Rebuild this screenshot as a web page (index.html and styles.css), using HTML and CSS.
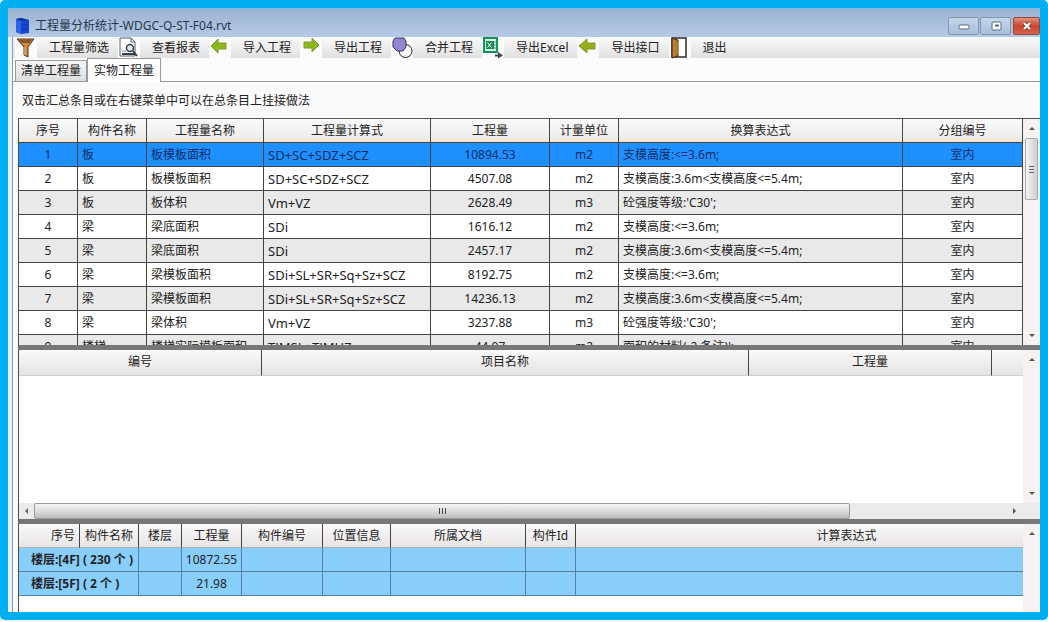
FILE: index.html
```html
<!DOCTYPE html>
<html lang="zh-CN">
<head>
<meta charset="utf-8">
<title>工程量分析统计</title>
<link rel="stylesheet" href="styles.css">
</head>
<body>
<div class="frame">
<main class="window">
  <header class="titlebar">
    <svg class="app-icon" width="16" height="17" viewBox="0 0 16 17"><path d="M1 2 6 1l8 2v13l-8 1-5-2z" fill="#1746cf"/><path d="M1 2v13l5 2V4z" fill="#2d62e6"/><path d="M6 1l8 2-8 1-5-2z" fill="#0d2f9e"/><path d="M7 8h6M7 12h6" stroke="#0d35ad"/></svg>
    <h1 class="title">工程量分析统计-WDGC-Q-ST-F04.rvt</h1>
    <div class="controls">
      <button class="control" aria-label="最小化"><svg width="14" height="10" viewBox="0 0 14 10"><rect x="2" y="4" width="10" height="4" rx="1" fill="#fff" stroke="#59687d"/></svg></button>
      <button class="control" aria-label="还原"><svg width="14" height="10" viewBox="0 0 14 10"><rect x="3" y="1" width="9" height="8" rx="1" fill="#fff" stroke="#59687d"/><path d="M6 4.500h4" stroke="#59687d" stroke-width="2"/></svg></button>
      <button class="control close" aria-label="关闭"><svg width="14" height="10" viewBox="0 0 14 10"><path d="M4 2l6 6M10 2L4 8" stroke="#74342b" stroke-width="4"/><path d="M4 2l6 6M10 2L4 8" stroke="#fff" stroke-width="2.400"/></svg></button>
    </div>
  </header>

  <nav class="toolbar">
    <button class="tool"><svg width="22" height="22" viewBox="0 0 22 22"><path d="M2 2h17l-6 8v10l-4-2v-8z" fill="#c98a3f" stroke="#57371b"/><path d="M3 3h14l-2 3H6z" fill="#8a5a2c"/><path d="M10 10v8" stroke="#efc27d"/></svg><span>工程量筛选</span></button>
    <button class="tool"><svg width="22" height="22" viewBox="0 0 22 22"><path d="M2 1h11l4 4v14H2z" fill="#fff" stroke="#5b626c"/><path d="M13 1v4h4" fill="none" stroke="#5b626c"/><circle cx="12" cy="11" r="3.500" fill="#dfe8f0" stroke="#39414c" stroke-width="1.500"/><path d="M4 17h14M15 14l4 5" stroke="#39414c" stroke-width="2"/><path d="M4 14h4" stroke="#8a9099"/></svg><span>查看报表</span></button>
    <button class="tool"><svg width="22" height="22" viewBox="0 0 22 22"><path d="M2 9l7-7v4h8v6H9v4z" fill="#8db51c" stroke="#7c9c30"/></svg><span>导入工程</span></button>
    <button class="tool"><svg width="22" height="22" viewBox="0 0 22 22"><path d="M19 8l-7-7v4H4v6h8v4z" fill="#8db51c" stroke="#7c9c30"/></svg><span>导出工程</span></button>
    <button class="tool"><svg width="22" height="22" viewBox="0 0 22 22"><circle cx="14.500" cy="14" r="6.500" fill="#fff" stroke="#222"/><path d="M4 1h9l2 3v6l-3 4H6l-4-4V4z" fill="#9089cf" stroke="#39375a"/></svg><span>合并工程</span></button>
    <button class="tool"><svg width="22" height="22" viewBox="0 0 22 22"><rect x="2" y="1" width="13" height="14" fill="#d9f4e6" stroke="#149457" stroke-width="2"/><rect x="4" y="4" width="8" height="8" fill="#138c51"/><path d="M5.500 5.500l4 5m0-5l-4 5" stroke="#fff"/><path d="M12 5h2M12 8h2M12 11h2" stroke="#37a873"/><path d="M13 18.500h4" stroke="#37464a" stroke-width="2"/><path d="M16 15l5 3.500-5 3z" fill="#37464a"/></svg><span>导出Excel</span></button>
    <button class="tool"><svg width="22" height="22" viewBox="0 0 22 22"><path d="M2 9l8-7v4h8v6h-8v4z" fill="#98ae18" stroke="#839433"/></svg><span>导出接口</span></button>
    <button class="tool"><svg width="22" height="22" viewBox="0 0 22 22"><path d="M3 1h14v19H3z" fill="#fff" stroke="#2b2b2b" stroke-width="1.500"/><path d="M3 1l6 2v16l-6 2z" fill="#b06a2c" stroke="#4a2b14"/><path d="M5 3v16" stroke="#d39a58"/><path d="M8 4v14" stroke="#a9aa2d"/></svg><span>退出</span></button>
  </nav>

  <div class="tabs" role="tablist">
    <button class="tab" role="tab" aria-selected="false">清单工程量</button>
    <button class="tab active" role="tab" aria-selected="true">实物工程量</button>
  </div>

  <section class="page">
    <p class="hint">双击汇总条目或在右键菜单中可以在总条目上挂接做法</p>

    <div class="pane pane-summary">
      <div class="view">
        <table class="grid">
          <colgroup><col class="w59"><col class="w69"><col class="w117"><col class="w167"><col class="w119"><col class="w69"><col><col class="w120"></colgroup>
          <thead><tr><th>序号</th><th>构件名称</th><th>工程量名称</th><th>工程量计算式</th><th>工程量</th><th>计量单位</th><th>换算表达式</th><th>分组编号</th></tr></thead>
          <tbody>
            <tr class="selected"><td>1</td><td>板</td><td>板模板面积</td><td>SD+SC+SDZ+SCZ</td><td>10894.53</td><td>m2</td><td>支模高度:&lt;=3.6m;</td><td>室内</td></tr>
            <tr><td>2</td><td>板</td><td>板模板面积</td><td>SD+SC+SDZ+SCZ</td><td>4507.08</td><td>m2</td><td>支模高度:3.6m&lt;支模高度&lt;=5.4m;</td><td>室内</td></tr>
            <tr><td>3</td><td>板</td><td>板体积</td><td>Vm+VZ</td><td>2628.49</td><td>m3</td><td>砼强度等级:'C30';</td><td>室内</td></tr>
            <tr><td>4</td><td>梁</td><td>梁底面积</td><td>SDi</td><td>1616.12</td><td>m2</td><td>支模高度:&lt;=3.6m;</td><td>室内</td></tr>
            <tr><td>5</td><td>梁</td><td>梁底面积</td><td>SDi</td><td>2457.17</td><td>m2</td><td>支模高度:3.6m&lt;支模高度&lt;=5.4m;</td><td>室内</td></tr>
            <tr><td>6</td><td>梁</td><td>梁模板面积</td><td>SDi+SL+SR+Sq+Sz+SCZ</td><td>8192.75</td><td>m2</td><td>支模高度:&lt;=3.6m;</td><td>室内</td></tr>
            <tr><td>7</td><td>梁</td><td>梁模板面积</td><td>SDi+SL+SR+Sq+Sz+SCZ</td><td>14236.13</td><td>m2</td><td>支模高度:3.6m&lt;支模高度&lt;=5.4m;</td><td>室内</td></tr>
            <tr><td>8</td><td>梁</td><td>梁体积</td><td>Vm+VZ</td><td>3237.88</td><td>m3</td><td>砼强度等级:'C30';</td><td>室内</td></tr>
            <tr><td>9</td><td>楼梯</td><td>楼梯实际模板面积</td><td>TJMSL+TJMHZ</td><td>44.97</td><td>m2</td><td>面积的材料(-2,备注)';</td><td>室内</td></tr>
          </tbody>
        </table>
      </div>
      <div class="vscroll"><span class="arrow up"></span><span class="thumb"></span><span class="arrow down"></span></div>
    </div>

    <div class="pane pane-items">
      <div class="stack">
        <div class="upper">
          <div class="view">
            <table class="grid items">
              <colgroup><col class="w243"><col><col class="w243"><col class="w31"></colgroup>
              <thead><tr><th>编号</th><th>项目名称</th><th>工程量</th><th></th></tr></thead>
            </table>
          </div>
          <div class="vscroll"><span class="arrow up"></span><span class="arrow down"></span></div>
        </div>
        <div class="hscroll"><span class="arrow left"></span><span class="hthumb"><i></i><i></i><i></i></span><span class="rest"></span><span class="arrow right"></span></div>
      </div>
    </div>

    <div class="pane pane-detail">
      <div class="view">
        <table class="grid detail">
          <colgroup><col class="w61"><col class="w59"><col class="w43"><col class="w60"><col class="w81"><col class="w68"><col class="w135"><col class="w50"><col></colgroup>
          <thead><tr><th class="end">序号</th><th>构件名称</th><th>楼层</th><th>工程量</th><th>构件编号</th><th>位置信息</th><th>所属文档</th><th>构件Id</th><th class="wide">计算表达式</th></tr></thead>
          <tbody>
            <tr><td class="group" colspan="2">楼层:[4F] ( 230 个 )</td><td></td><td>10872.55</td><td></td><td></td><td></td><td></td><td></td></tr>
            <tr><td class="group" colspan="2">楼层:[5F] ( 2 个 )</td><td></td><td>21.98</td><td></td><td></td><td></td><td></td><td></td></tr>
          </tbody>
        </table>
      </div>
      <div class="vscroll"><span class="arrow up"></span></div>
    </div>
  </section>
</main>
</div>
</body>
</html>
```
FILE: styles.css
```css
* { box-sizing: border-box; }

body {
  margin: 0;
  height: 100vh;
  padding-bottom: 2px;
  background: #e8fbff;
  color: #222;
  font: 12px/16px "Noto Sans", "Noto Sans CJK SC", sans-serif;
}

button { font: inherit; color: inherit; }

.frame {
  height: 100%;
  padding: 8px;
  border-radius: 5px;
  background: #00aeef;
}

.window {
  display: flex;
  flex-direction: column;
  height: 100%;
  padding-left: 5px;
  background: linear-gradient(90deg, #e9f1fa 0 4px, #8c9bb2 4px 5px, #fcfcfc 5px);
}

.titlebar {
  display: flex;
  align-items: center;
  gap: 4px;
  flex: none;
  height: 29px;
  margin-left: -5px;
  padding: 4px 0 0 7px;
  border-top: 2px solid #83b9dd;
  background: linear-gradient(#9db5d1, #b4cae6);
}

.title { margin: 0; font-size: 12px; font-weight: 400; color: #26364a; }

.controls { display: flex; gap: 1px; margin-left: auto; }

.control {
  display: grid;
  place-items: center;
  width: 31px;
  height: 18px;
  padding: 0;
  border: 1px solid #8196b2;
  border-radius: 2px;
  background: linear-gradient(#c5d6ea, #a9bfdb);
}

.close {
  width: 27px;
  margin-left: 1px;
  border-color: #8c4a42;
  background: linear-gradient(#e2927d, #c9452b 50%, #d8664a);
}

.toolbar {
  display: flex;
  align-items: center;
  gap: 9px;
  flex: none;
  height: 21px;
  padding-left: 2px;
  background: linear-gradient(#fafafa, #e0e0e0);
}

.tool {
  display: flex;
  align-items: center;
  gap: 12px;
  height: 21px;
  padding: 0;
  border: 0;
  background: none;
  white-space: nowrap;
}

.tool svg { background: #fbfbfb; }

.tabs {
  display: flex;
  align-items: flex-end;
  flex: none;
  height: 24px;
  padding-left: 2px;
  border-bottom: 1px solid #999;
}

.tab {
  height: 21px;
  padding: 0 5px;
  border: 1px solid #9a9a9a;
  border-bottom: 0;
  background: linear-gradient(#f5f5f5, #dedede);
}

.tab.active {
  height: 24px;
  padding: 0 6px;
  margin-bottom: -1px;
  background: #fff;
}

.page {
  display: flex;
  flex-direction: column;
  flex: 1;
  min-height: 0;
  padding-left: 5px;
  background: #fafafa;
}

.hint { flex: none; margin: 0; padding: 11px 4px 9px; }

.pane {
  display: flex;
  min-height: 0;
  border-left: 1px solid #4c4c4c;
  border-bottom: 5px solid #777;
  background: #fff;
}

.pane-summary { flex: 231 1 0; border-top: 1px solid #555; }
.pane-items { flex: 173 1 0; }
.pane-detail { flex: 90 1 0; border-bottom: 0; }

.view { flex: 1; min-width: 0; overflow: hidden; }

.grid {
  width: 100%;
  table-layout: fixed;
  border-collapse: separate;
  border-spacing: 0;
}

.grid th,
.grid td {
  height: 24px;
  padding: 0 4px;
  border-right: 1px solid #444;
  border-bottom: 1px solid #444;
  font-weight: 400;
  line-height: 16px;
  text-align: center;
  white-space: nowrap;
  overflow: hidden;
}

.grid th { background: linear-gradient(#fafafa, #e4e3e2); }
.pane-summary th { background: linear-gradient(#fafafa, #ededed 80%, #fae3c4); }
.pane-summary tbody tr:nth-child(odd) { background: #e9e9e9; }
.pane-summary tbody tr.selected { background: #1e90ff; color: #0c2d63; }

.pane-summary td:nth-child(2),
.pane-summary td:nth-child(3),
.pane-summary td:nth-child(4),
.pane-summary td:nth-child(7) { text-align: left; }

.pane-summary td:nth-child(4) { font-size: 13px; }

.items th { height: 26px; border-bottom-color: #d0d0d0; }
.items th:last-child { border-right: 0; }

.detail th { border-bottom-color: #a5b4bf; background: linear-gradient(#fafafa, #e8e4e4); }
.detail .end { text-align: right; }
.detail .wide { padding-left: 98px; }
.detail td { padding: 0 2px; border-color: #567f9f; background: #87cefa; }
.detail .group { padding-left: 12px; font-weight: 700; text-align: left; }
.detail tr > :last-child { border-right: 0; }

.w31 { width: 31px; }
.w43 { width: 43px; }
.w50 { width: 50px; }
.w59 { width: 59px; }
.w60 { width: 60px; }
.w61 { width: 61px; }
.w68 { width: 68px; }
.w69 { width: 69px; }
.w81 { width: 81px; }
.w117 { width: 117px; }
.w119 { width: 119px; }
.w120 { width: 120px; }
.w135 { width: 135px; }
.w167 { width: 167px; }
.w243 { width: 243px; }

.vscroll {
  display: flex;
  flex-direction: column;
  align-items: center;
  flex: none;
  width: 17px;
  padding: 8px 0;
  background: #f6f2f2;
}

.thumb {
  width: 13px;
  height: 62px;
  margin-top: 8px;
  border: 1px solid #aaa;
  border-radius: 2px;
  background:
    repeating-linear-gradient(#666 0 1px, transparent 1px 3px) center / 5px 7px no-repeat,
    linear-gradient(90deg, #f5f5f5, #cfcfcf);
}

.arrow { flex: none; border: 3px solid transparent; }
.up { border-top: 0; border-bottom-color: #6b4a4a; }
.down { margin-top: auto; border-bottom: 0; border-top-color: #6b4a4a; }
.left { margin: 0 6px; border-left: 0; border-right-color: #666; }
.right { margin: 0 24px 0 6px; border-right: 0; border-left-color: #555; }

.stack { display: flex; flex-direction: column; flex: 1; min-width: 0; }
.upper { display: flex; flex: 1; min-height: 0; }

.hscroll {
  display: flex;
  align-items: center;
  flex: none;
  height: 16px;
  background: #ebebeb;
}

.hthumb {
  display: flex;
  align-items: center;
  justify-content: center;
  gap: 2px;
  flex: 814 1 0;
  height: 16px;
  border: 1px solid #9a9a9a;
  border-radius: 2px;
  background: linear-gradient(#f5f5f5, #dcdcdc 50%, #bdbdbd);
}

.hthumb i { width: 1px; height: 6px; background: #444; }
.rest { flex: 157 1 0; }
```
